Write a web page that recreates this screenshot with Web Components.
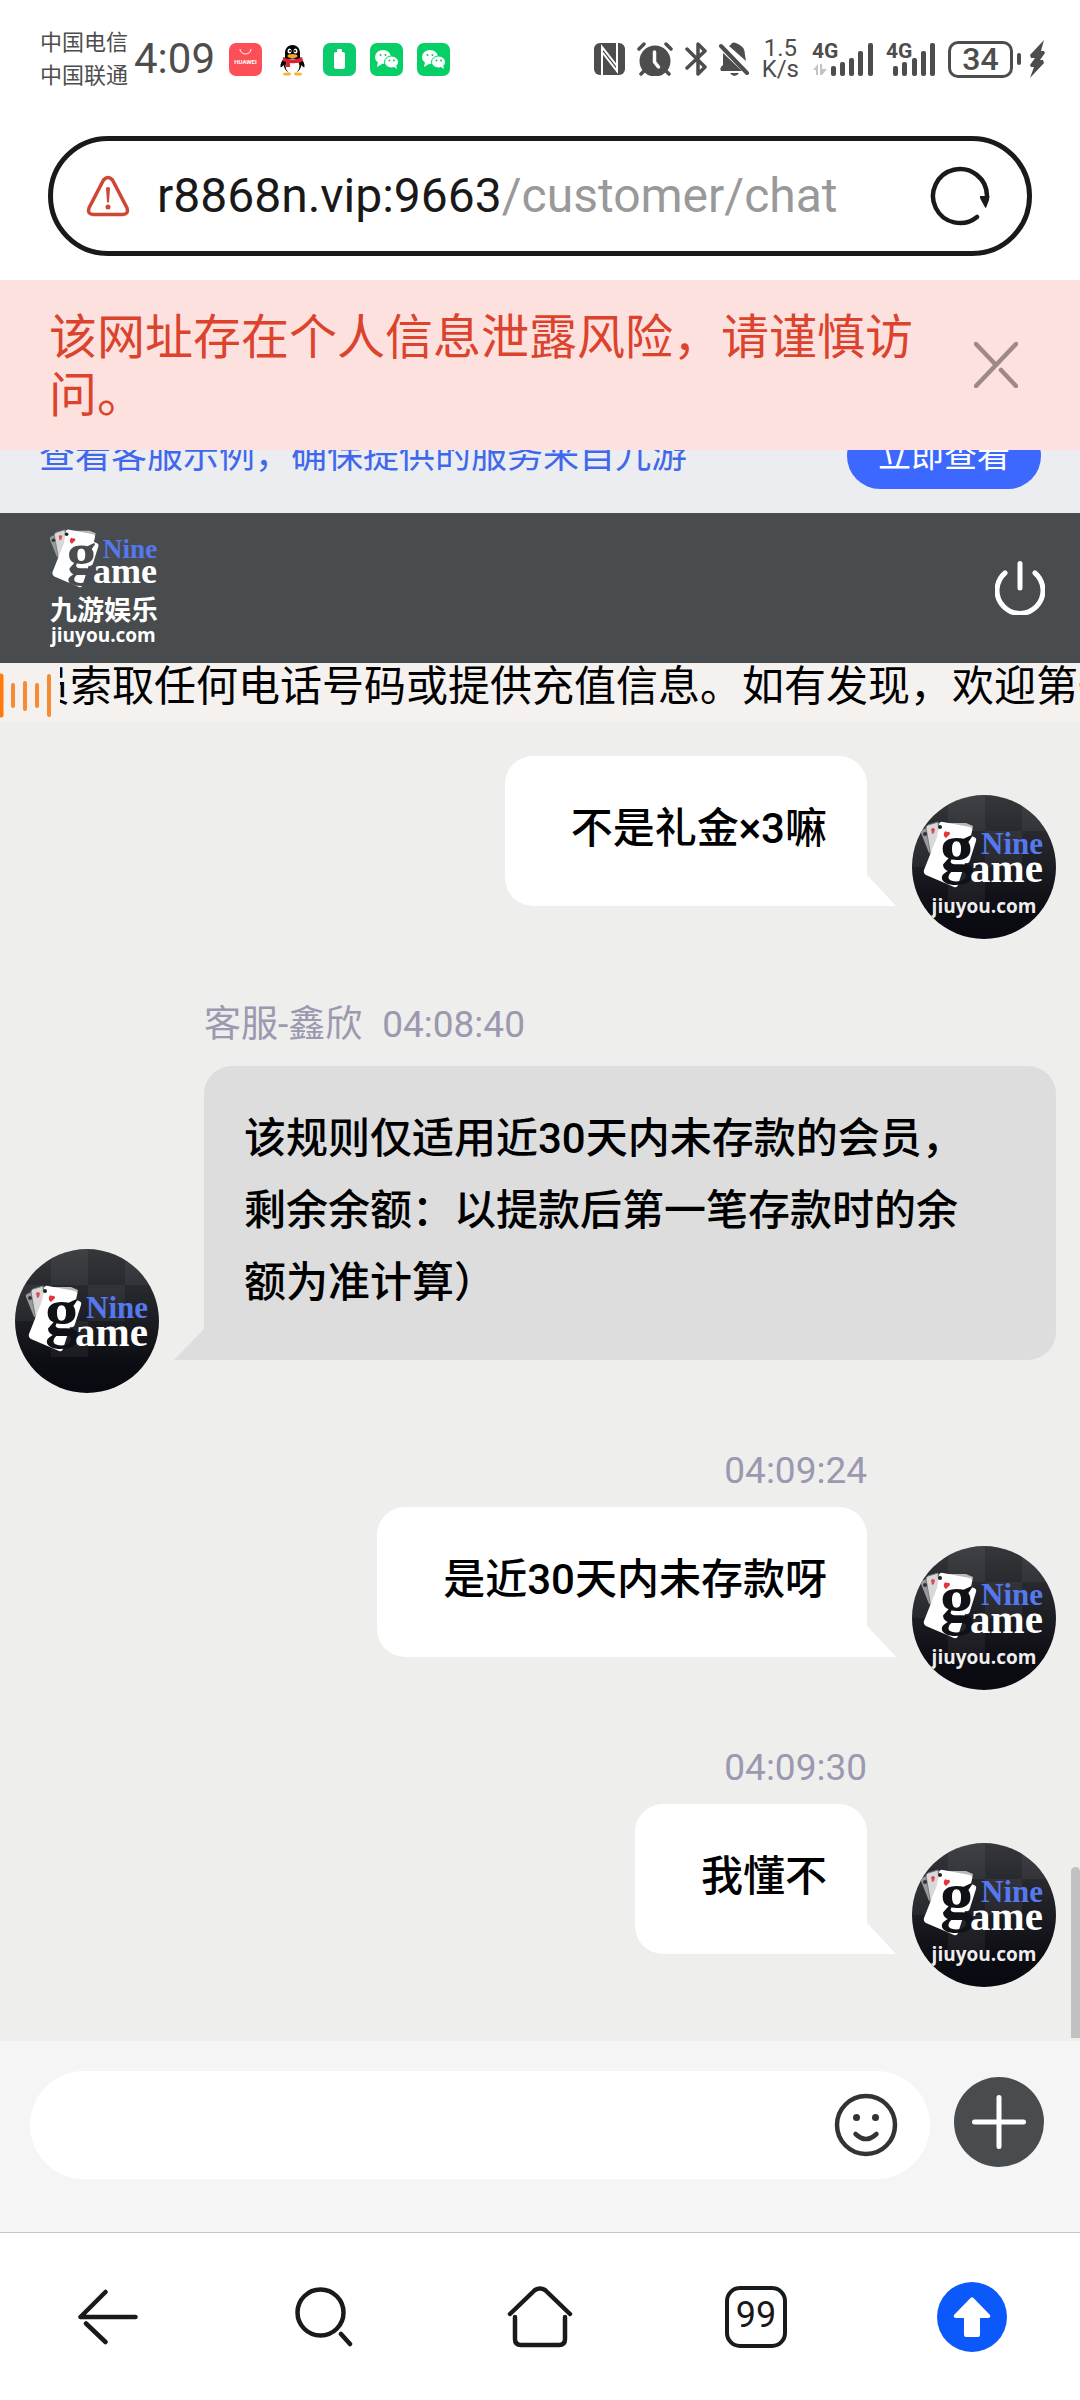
<!DOCTYPE html>
<html lang="zh-CN">
<head>
<meta charset="utf-8">
<meta name="viewport" content="width=device-width, initial-scale=1">
<title>customer/chat</title>
<style>
  html, body { margin: 0; }
  body { font-family: Roboto, "Noto Sans CJK SC", sans-serif; background: #fff; color: #191919; }
</style>
</head>
<body>
<chat-app></chat-app>
<script>
const BASE = `
  *, *::before, *::after { box-sizing: border-box; }
  button { border: 0; padding: 0; margin: 0; background: none; color: inherit; font: inherit; cursor: pointer; }
  svg { display: block; flex: none; }
`;

function define(name, css, html) {
  const tpl = document.createElement('template');
  tpl.innerHTML = `<style>${BASE}${css}</style>`;
  customElements.define(name, class extends HTMLElement {
    constructor() {
      super();
      this.attachShadow({ mode: 'open' }).appendChild(tpl.content.cloneNode(true));
    }
    connectedCallback() {
      if (this.ready) return;
      this.ready = true;
      const body = document.createElement('template');
      body.innerHTML = typeof html === 'function' ? html(this) : html;
      this.shadowRoot.appendChild(body.content.cloneNode(true));
    }
  });
}

/* Playing cards with the brand lettering, shared by the header logo and the avatars */
const brandMark = ink => `
  <path d="M9 38Q8 36 10 35L18 31L24 58L17 58Z" fill="#9a9a9c"/>
  <path d="M14 33Q14 31 16 30L26 27L28 50L19 62Z" fill="#d8d8da" stroke="#77787c" stroke-width="1"/>
  <path d="M26 28L54 28L61 31L60 36L38 36Z" fill="#b9b9bc"/>
  <path d="M27 29Q28 26 31 27L58 32Q61 33 60 36L59 41L62 42Q65 43 64 46L58 65Q57 69 53 68L46 90Q45 93 42 92L14 80Q11 78 12 75L25 42Z" fill="#fff"/>
  <circle cx="13" cy="39" r="2" fill="#333"/>
  <path d="M19 34l2-1 2 1-1 4-2 1z" fill="#e2474c"/>
  <circle cx="28" cy="32" r="2" fill="#222"/>
  <path d="M32 38q1-3 3-1q3-1 3 2l-4 4q-3-2-2-5z" fill="#e2343b"/>
  <g font-family="'Liberation Serif', serif" font-weight="700">
    <text x="28" y="76" font-size="68" fill="${ink}">g</text>
    <text x="69" y="59" font-size="31" fill="#5578ee">Nine</text>
    <text x="58" y="87" font-size="41" fill="#fff">ame</text>
  </g>`;

const wechat = `
  <svg width="33" height="33" viewBox="0 0 33 33" aria-hidden="true">
    <rect width="33" height="33" rx="7" fill="#06cf65"/>
    <ellipse cx="13" cy="14" rx="8" ry="7" fill="#fff"/><path d="M8 19l-1 5 5-3z" fill="#fff"/>
    <ellipse cx="21.500" cy="19" rx="7" ry="6" fill="#fff" stroke="#06cf65"/><path d="M24 24l3 2-1-4z" fill="#fff"/>
    <g fill="#06cf65"><circle cx="10.500" cy="12" r="1"/><circle cx="15.500" cy="12" r="1"/><circle cx="19.500" cy="17.500" r="1"/><circle cx="24" cy="17.500" r="1"/></g>
  </svg>`;

define('status-bar', `
  :host { display: flex; align-items: center; justify-content: space-between; height: 118px; padding: 0 35px 0 40px; color: #4d4d4d; }
  .left, .right, .power { display: flex; align-items: center; }
  .left { gap: 14px; } .right { gap: 12px; } .power { gap: 8px; }
  .carriers { font-size: 22px; line-height: 33px; }
  .clock { display: flex; align-items: center; gap: 6px; }
  time { font-size: 42px; line-height: 50px; font-weight: 400; }
  .speed { font-size: 24px; line-height: 21px; text-align: center; padding: 0 1px; }
  .cell { display: flex; align-items: center; }
  .level { display: grid; place-items: center; width: 65px; height: 37px; border: 3px solid #4d4d4d; border-radius: 10px; font-size: 32px; font-weight: 500; line-height: 31px; }
  .nub { width: 4px; height: 12px; margin-left: 4px; border-radius: 2px; background: #4d4d4d; }
`, `
  <div class="left">
    <div class="clock"><div class="carriers"><div>中国电信</div><div>中国联通</div></div><time>4:09</time></div>
    <svg width="33" height="33" viewBox="0 0 33 33" aria-hidden="true"><rect width="33" height="33" rx="7" fill="#fd4f57"/><path d="M11 6a5.500 5 0 0 0 11 0" fill="none" stroke="#fff"/><text x="16.500" y="21" font-size="6" font-weight="700" fill="#fff" text-anchor="middle" font-family="Roboto">HUAWEI</text></svg>
    <svg width="33" height="33" viewBox="0 0 33 33" aria-hidden="true">
      <path d="M16.500 2c-5 0-7.500 4-7.500 8v4c-3 3-5 7-4.500 10 1 1 2-1 3-2 1 5 4 8 9 8s8-3 9-8c1 1 2 3 3 2 .5-3-1.500-7-4.500-10v-4c0-4-2.500-8-7.500-8z" fill="#050505"/>
      <ellipse cx="16.500" cy="23" rx="7" ry="7.500" fill="#fff"/>
      <ellipse cx="11" cy="31" rx="4" ry="1.500" fill="#f4b52c"/><ellipse cx="22" cy="31" rx="4" ry="1.500" fill="#f4b52c"/>
      <path d="M7 14q9 5 19 0l1 4q-5 3-13 2v4h-4v-5l-3-1z" fill="#dc2531"/>
      <ellipse cx="13.500" cy="8" rx="2" ry="2.500" fill="#fff"/><ellipse cx="19.500" cy="8" rx="2" ry="2.500" fill="#fff"/><circle cx="14" cy="8" r="1"/><circle cx="19" cy="8" r="1"/>
      <ellipse cx="16.500" cy="13" rx="5" ry="2" fill="#f4a62c"/>
    </svg>
    <svg width="33" height="33" viewBox="0 0 33 33" aria-hidden="true"><rect width="33" height="33" rx="7" fill="#0bcb6d"/><rect x="14" y="6" width="5" height="3" rx="1" fill="#fff"/><rect x="11" y="9" width="11" height="17" rx="2" fill="#fff"/></svg>
    ${wechat}${wechat}
  </div>
  <div class="right">
    <svg width="31" height="32" viewBox="0 0 31 32" aria-hidden="true"><rect width="31" height="32" rx="6" fill="#4d4d4d"/><path d="M8 32V4l15 19M23 0v28L8 9" fill="none" stroke="#fff" stroke-width="2"/></svg>
    <svg width="36" height="34" viewBox="0 0 36 34" aria-hidden="true"><circle cx="18" cy="19" r="15.500" fill="#4d4d4d"/><path d="M2 7l5-5M34 7l-5-5M7 29l-3 3M29 29l3 3" stroke="#4d4d4d" stroke-width="3.500" stroke-linecap="round"/><path d="M17.500 10v10l4 5" fill="none" stroke="#fff" stroke-width="3.500" stroke-linecap="round"/></svg>
    <svg width="22" height="36" viewBox="0 0 22 36" aria-hidden="true"><path d="M2 8l18 18-7 7V3l7 7L2 27" fill="none" stroke="#4d4d4d" stroke-width="3.500" stroke-linecap="round" stroke-linejoin="round"/></svg>
    <svg width="30" height="34" viewBox="0 0 30 34" aria-hidden="true"><path d="M2 4l26 27" stroke="#4d4d4d" stroke-width="4" stroke-linecap="round"/><path d="M4 11l19 18H2q-2-3 2-6zM10 4q2-1 3-3 2-1 4 0 9 3 9 12l1 6L10 4zM11 31h9q-2 3-4.500 3T11 31z" fill="#4d4d4d"/></svg>
    <div class="speed"><div>1.5</div><div>K/s</div></div>
    <svg width="62" height="36" viewBox="0 0 62 36" fill="#4d4d4d"><text x="0" y="17" font-family="Roboto" font-size="21" font-weight="700">4G</text><path d="M1 29l5-6v11H4v-5zM8 23h2v5h5l-5 6H8z" fill="#c4c4c4"/><rect x="19" y="25" width="5" height="10" rx="2"/><rect x="28" y="21" width="5" height="14" rx="2"/><rect x="37" y="17" width="5" height="18" rx="2"/><rect x="46" y="10" width="5" height="25" rx="2"/><rect x="56" y="2" width="5" height="33" rx="2"/></svg>
    <svg width="50" height="36" viewBox="0 0 50 36" fill="#4d4d4d"><text x="0" y="17" font-family="Roboto" font-size="21" font-weight="700">4G</text><rect x="7" y="25" width="5" height="10" rx="2"/><rect x="16" y="21" width="5" height="14" rx="2"/><rect x="26" y="17" width="5" height="18" rx="2"/><rect x="35" y="10" width="5" height="25" rx="2"/><rect x="44" y="2" width="5" height="33" rx="2"/></svg>
    <div class="power"><div class="cell"><div class="level">34</div><div class="nub"></div></div>
    <svg width="16" height="38" viewBox="0 0 16 38" aria-hidden="true"><path d="M15 0L1 15l1 3h4l-5 7 1 2h3L1 38l14-15-1-3h-3l5-7-1-2h-3z" fill="#4d4d4d"/></svg></div>
  </div>`);

define('address-bar', `
  :host { display: block; padding: 18px 48px 24px; }
  .bar { display: flex; align-items: center; height: 120px; padding: 0 37px 0 33px; border: 5px solid #191a1b; border-radius: 60px; }
  .url { flex: 1; min-width: 0; padding-left: 27px; text-align: left; font-size: 48px; line-height: 56px; white-space: nowrap; overflow: hidden; }
  .path { color: #999; }
`, `
  <div class="bar">
    <svg width="44" height="42" viewBox="0 0 44 42" aria-hidden="true"><path d="M17.500 5Q22 0 26.500 5L41 33Q43 39 37 39.500H7Q1 39 3 33Z" fill="none" stroke="#d04635" stroke-width="3.500"/><path d="M20 13q2-2 4 0l-1 14q-1 1-2 0z" fill="#d04635"/><circle cx="22" cy="32" r="2.500" fill="#d04635"/></svg>
    <button class="url">r8868n.vip:9663<span class="path">/customer/chat</span></button>
    <button aria-label="刷新"><svg width="60" height="60" viewBox="0 0 60 60"><path d="M47 51A27 27 0 1 1 57 30" fill="none" stroke="#191a1b" stroke-width="4.500" stroke-linecap="round"/><path d="M50 30H59.500L59 34 56 42q-1 0-6-10z" fill="#191a1b"/></svg></button>
  </div>`);

define('risk-banner', `
  :host { display: flex; align-items: center; gap: 40px; padding: 25px 62px 25px 49px; background: #fde1de; }
  p { flex: 1; margin: 0; padding-top: 4px; font-size: 48px; line-height: 58px; color: #dc432d; }
`, `
  <p><slot></slot></p>
  <button aria-label="关闭"><svg width="44" height="46" viewBox="0 0 44 46"><path d="M2 44L42 2M2 2L21 22M27 28L42 44" stroke="#9d8986" stroke-width="4.500" stroke-linecap="round"/></svg></button>`);

define('tip-strip', `
  :host { display: block; overflow: hidden; background: #ecedf1; }
  .row { display: flex; align-items: center; justify-content: space-between; margin-top: -27px; padding: 0 39px 24px 39px; }
  a { font-size: 36px; line-height: 66px; color: #4168ec; text-decoration: none; white-space: nowrap; }
  button { width: 194px; height: 66px; border-radius: 33px; background: #3d68ff; color: #fff; font-size: 33px; line-height: 60px; }
`, `<div class="row"><a href="#tip"><slot></slot></a><button>立即查看</button></div>`);

define('site-header', `
  :host { display: flex; align-items: center; justify-content: space-between; height: 150px; padding: 0 35px 0 50px; background: #484c4e; }
`, `
  <svg width="110" height="118" viewBox="0 0 110 118" role="img">
    <g transform="translate(-8 -23) scale(.88)">${brandMark('#484c4e')}</g>
    <text x="0" y="91" font-size="27" font-weight="700" fill="#fff" font-family="'Noto Sans CJK SC', sans-serif">九游娱乐</text>
    <text x="1" y="113" font-size="19" font-weight="700" fill="#fff" font-family="'Open Sans', sans-serif">jiuyou.com</text>
  </svg>
  <button aria-label="退出"><svg width="50" height="54" viewBox="0 0 50 54"><path d="M25 2.500V27M10 12A23 23 0 1 0 40 12" fill="none" stroke="#fff" stroke-width="5" stroke-linecap="round"/></svg></button>`);

define('notice-ticker', `
  :host { display: flex; height: 59px; background: #f5f1ef; --scroll: 32px; }
  svg { margin-right: 6px; }
  .track { flex: 1; min-width: 0; overflow: hidden; white-space: nowrap; font-size: 42px; line-height: 47px; color: #000; text-indent: calc(-1 * var(--scroll)); }
`, `
  <svg width="54" height="59" viewBox="0 0 54 59" aria-hidden="true" stroke="#f68b35" stroke-width="4" stroke-linecap="round"><path d="M1 13V52" stroke="#ff7a0a" stroke-width="5"/><path d="M13 22V43M25 20V46M37 22V43M49 13V52"/></svg>
  <div class="track"><slot></slot></div>`);

define('user-avatar', `
  :host { display: block; flex: none; width: 144px; height: 144px; border-radius: 50%; overflow: hidden; }
`, el => {
  const plain = el.hasAttribute('plain');
  return `
  <svg width="144" height="144" viewBox="0 0 144 144" role="img">
    <defs><linearGradient id="bg" x1="0" y1="0" x2="0" y2="1"><stop offset="0" stop-color="#36373b"/><stop offset=".5" stop-color="#1c1d22"/><stop offset=".8" stop-color="#0c0c13"/><stop offset="1" stop-color="#090a11"/></linearGradient></defs>
    <rect width="144" height="144" fill="url(#bg)"/>
    <g fill="#fff" fill-opacity=".05"><path d="M36 0h37v36H36zM73 36h37v36H73zM0 36h36v36H0zM110 0h34v36h-34zM36 72h37v36H36z"/></g>
    <g${plain ? ' transform="translate(2 10)"' : ''}>${brandMark('#101117')}</g>
    ${plain ? '' : `<text x="72" y="118" text-anchor="middle" font-size="19" font-weight="700" fill="#eee" font-family="'Open Sans', sans-serif">jiuyou.com</text>`}
  </svg>`;
});

/* One chat message; side="me" sits on the right, side="agent" on the left */
define('chat-message', `
  :host { display: block; }
  .meta { margin-right: 213px; margin-bottom: 9px; text-align: right; font-size: 37px; line-height: 55px; color: #9b98b0; }
  .row { display: flex; align-items: flex-end; justify-content: flex-end; padding: 0 24px 0 15px; }
  .bubble { min-width: 0; margin-bottom: 33px; padding: 37px 40px 41px 66px; border-radius: 28px 28px 0 28px; background: #fff; color: #000; font-size: 42px; font-weight: 500; line-height: 72px; }
  .tail { margin-bottom: 33px; margin-right: 16px; color: #fff; }
  :host([side=agent]) .meta { display: flex; gap: 20px; margin: 0 24px 14px 204px; padding-top: 8px; }
  :host([side=agent]) .bubble { flex: 1; padding: 37px 66px 41px 40px; border-radius: 28px 28px 28px 0; background: #ddd; }
  :host([side=agent]) .tail { margin-right: 0; margin-left: 15px; color: #ddd; }
`, el => {
  const agent = el.getAttribute('side') === 'agent';
  const name = el.getAttribute('name');
  const time = el.getAttribute('time');
  const meta = time ? `<div class="meta">${name ? `<span>${name}</span>` : ''}<time>${time}</time></div>` : '';
  const bubble = `<div class="bubble"><slot></slot></div>`;
  return meta + `<div class="row">` + (agent
    ? `<user-avatar plain></user-avatar><svg class="tail" width="30" height="31" viewBox="0 0 30 31"><path d="M30 0V31H0Z" fill="currentColor"/></svg>${bubble}`
    : `${bubble}<svg class="tail" width="29" height="31" viewBox="0 0 29 31"><path d="M0 0V31H29Z" fill="currentColor"/></svg><user-avatar></user-avatar>`) + `</div>`;
});

define('chat-log', `
  :host { display: flex; flex-direction: column; gap: 50px; position: relative; flex: 1; padding: 34px 0 50px; background: #eeeeec; }
  .thumb { position: absolute; right: 0; bottom: 3px; width: 9px; height: 171px; border-radius: 5px 5px 0 0; background: #c1c1c1; }
`, `<slot></slot><div class="thumb"></div>`);

define('message-composer', `
  :host { display: flex; align-items: center; gap: 24px; padding: 30px 36px 53px 30px; background: #f5f5f5; }
  .field { flex: 1; min-width: 0; display: flex; align-items: center; height: 108px; padding: 0 32px 0 40px; border-radius: 54px; background: #fff; }
  input { flex: 1; min-width: 0; height: 72px; border: 0; outline: 0; padding: 0; background: transparent; font: inherit; font-size: 42px; }
  .add { display: grid; place-items: center; width: 90px; height: 90px; margin-bottom: 6px; border-radius: 50%; background: #484c4e; }
`, `
  <div class="field">
    <input type="text" aria-label="消息">
    <button aria-label="表情"><svg width="64" height="64" viewBox="0 0 64 64"><circle cx="32" cy="32" r="29" fill="none" stroke="#333" stroke-width="4.500"/><circle cx="22.500" cy="24.500" r="3.500" fill="#333"/><circle cx="41.500" cy="24.500" r="3.500" fill="#333"/><path d="M21.500 41Q32 51 42.500 41" fill="none" stroke="#333" stroke-width="4.500" stroke-linecap="round"/></svg></button>
  </div>
  <button class="add" aria-label="更多"><svg width="54" height="54" viewBox="0 0 54 54"><path d="M27 2.500V51.500M2.500 27H51.500" stroke="#fff" stroke-width="5" stroke-linecap="round"/></svg></button>`);

define('browser-nav', `
  :host { display: block; border-top: 1px solid #c4c5c4; background: #fff; }
  nav { display: grid; grid-template-columns: repeat(5, 1fr); height: 167px; }
  button { display: grid; place-items: center; }
  .tabs { display: grid; place-items: center; width: 62px; height: 62px; border: 4px solid #191a1b; border-radius: 15px; padding-bottom: 4px; font-size: 36px; line-height: 40px; }
`, `
  <nav>
    <button aria-label="返回"><svg width="60" height="56" viewBox="0 0 60 56"><path d="M2.500 28H57.500M2.500 28L27.500 3M8 34.500L27.500 53" fill="none" stroke="#191a1b" stroke-width="4.500" stroke-linecap="round"/></svg></button>
    <button aria-label="搜索"><svg width="58" height="60" viewBox="0 0 58 60"><circle cx="25.500" cy="25.500" r="23" fill="none" stroke="#191a1b" stroke-width="4.500"/><path d="M46 47L55 57" stroke="#191a1b" stroke-width="4.500" stroke-linecap="round"/></svg></button>
    <button aria-label="主页"><svg width="66" height="62" viewBox="0 0 66 62"><path d="M3 28L28 4Q33 1 38 4L63 28M8 31V53Q8 59 14 59H52Q58 59 58 53V31" fill="none" stroke="#191a1b" stroke-width="4.500" stroke-linecap="round"/></svg></button>
    <button><span class="tabs">99</span></button>
    <button aria-label="回到顶部"><svg width="70" height="70" viewBox="0 0 70 70"><circle cx="35" cy="35" r="35" fill="#0b58fb"/><path d="M33.500 16Q35 14.500 36.500 16L53 33Q54 36 51 36H43V53Q43 55 41 55H29Q27 55 27 53V36H19Q16 36 17 33Z" fill="#fff"/></svg></button>
  </nav>`);

define('chat-app', `
  :host { display: flex; flex-direction: column; min-height: 100vh; }
`, `
  <status-bar></status-bar>
  <address-bar></address-bar>
  <risk-banner>该网址存在个人信息泄露风险，请谨慎访问。</risk-banner>
  <tip-strip>查看客服示例，确保提供的服务来自九游</tip-strip>
  <site-header></site-header>
  <notice-ticker>员索取任何电话号码或提供充值信息。如有发现，欢迎第一</notice-ticker>
  <chat-log>
    <chat-message side="me">不是礼金×3嘛</chat-message>
    <chat-message side="agent" name="客服-鑫欣" time="04:08:40">该规则仅适用近30天内未存款的会员，剩余余额：以提款后第一笔存款时的余额为准计算）</chat-message>
    <chat-message side="me" time="04:09:24">是近30天内未存款呀</chat-message>
    <chat-message side="me" time="04:09:30">我懂不</chat-message>
  </chat-log>
  <message-composer></message-composer>
  <browser-nav></browser-nav>`);
</script>
</body>
</html>
